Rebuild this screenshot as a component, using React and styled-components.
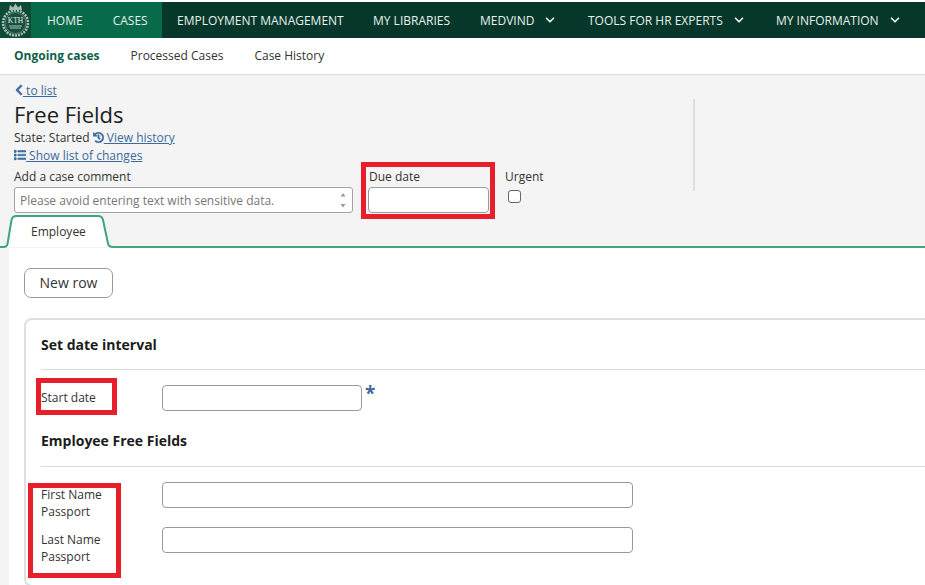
import React from "react";
import styled, { createGlobalStyle } from "styled-components";
import { FaChevronLeft, FaHistory, FaList } from "react-icons/fa";
import { FiChevronDown } from "react-icons/fi";

const GlobalStyle = createGlobalStyle`
  html, body {
    margin: 0;
    padding: 0;
    background: #fff;
    overflow: hidden;
  }
  body {
    font-family: "Open Sans", "Liberation Sans", sans-serif;
    font-size: 12px;
    color: #222;
  }
  * {
    box-sizing: border-box;
  }
`;

const Page = styled.div`
  position: relative;
  width: 925px;
  height: 585px;
  padding-top: 2px;
  overflow: hidden;
`;

const TopBar = styled.nav`
  display: flex;
  align-items: center;
  height: 36px;
  background: #06372a;
`;

const Logo = styled.div`
  width: 31px;
  height: 36px;
  flex: none;
  background: #0a4a36;
  display: flex;
  align-items: center;
  justify-content: center;
`;

const ActiveGroup = styled.div`
  display: flex;
  align-items: center;
  flex: none;
  height: 100%;
  width: 131px;
  padding-left: 16px;
  gap: 30px;
  background: #076a4b;
`;

const NavItems = styled.div`
  display: flex;
  align-items: center;
  flex: none;
  height: 100%;
  padding-left: 15px;
`;

const NavItem = styled.span`
  display: flex;
  align-items: center;
  width: ${(p) => (p.$w ? `${p.$w}px` : "auto")};
  flex: none;
  font-size: 12px;
  color: #e6f2ec;
  white-space: nowrap;

  svg {
    margin-left: 9px;
    flex: none;
  }
`;

const SubNav = styled.div`
  display: flex;
  align-items: center;
  height: 37px;
  padding: 0 0 2px 14px;
  gap: 31px;
  background: #fff;
  border-bottom: 1px solid #dcdcdc;
`;

const SubLink = styled.span`
  font-size: 12px;
  font-weight: ${(p) => (p.$active ? 700 : 400)};
  color: ${(p) => (p.$active ? "#0f6049" : "#333")};
`;

const Content = styled.div`
  background: #f4f4f4;
`;

const Header = styled.header`
  position: relative;
  height: 173px;
  padding: 7px 14px 0;
`;

const Divider = styled.div`
  position: absolute;
  left: 693px;
  top: 24px;
  width: 2px;
  height: 92px;
  background: #dedede;
`;

const BlueLink = styled.a`
  color: #3a6b9c;
  text-decoration: underline;
  font-size: 12px;
  line-height: 17px;

  svg {
    vertical-align: -1px;
    stroke: currentColor;
    stroke-width: 24px;
  }
`;

const BackIcon = styled(FaChevronLeft)`
  font-size: 12px;
  margin: 0 -2px 0 -1px;
`;

const HistoryIcon = styled(FaHistory)`
  font-size: 11px;
`;

const ListIcon = styled(FaList)`
  font-size: 12px;
`;

const Title = styled.h1`
  margin: 0;
  font-size: 22px;
  font-weight: 400;
  line-height: 30px;
  color: #1d1d1d;
`;

const InfoLine = styled.div`
  height: 18px;
  line-height: 18px;
  font-size: 12px;
  color: #333;
`;

const FieldRow = styled.div`
  display: flex;
  align-items: flex-start;
  margin-top: 3px;
`;

const Field = styled.div`
  width: ${(p) => p.$w}px;
  margin-left: ${(p) => p.$ml || 0}px;
  flex: none;
`;

const FieldLabel = styled.div`
  height: 19px;
  line-height: 18px;
  padding-left: ${(p) => p.$pl || 0}px;
  font-size: 12px;
  color: #333;
`;

const CommentBox = styled.div`
  display: flex;
  align-items: center;
  justify-content: space-between;
  height: 26px;
  padding: 0 5px;
  background: #fff;
  border: 1px solid #a3a3a3;
  border-radius: 3px;
  font-size: 12px;
  color: #777;
`;

const Spin = styled.svg`
  flex: none;
`;

const TextInput = styled.input`
  display: block;
  width: ${(p) => p.$w}px;
  height: 26px;
  background: #fff;
  border: 1px solid #9a9a9a;
  border-radius: 4px;
  padding: 0 5px;
`;

const CheckBox = styled.input.attrs({ type: "checkbox" })`
  appearance: none;
  display: block;
  width: 13px;
  height: 13px;
  margin: 3px 0 0 3px;
  background: #fff;
  border: 1px solid #666;
  border-radius: 3px;
`;

const TabRow = styled.div`
  position: absolute;
  left: 0;
  right: 0;
  bottom: 0;
  height: 33px;
`;

const Tab = styled.svg`
  position: absolute;
  left: 0;
  bottom: 0;
`;

const TabLine = styled.div`
  position: absolute;
  left: 113px;
  right: 0;
  bottom: 0;
  height: 2px;
  background: #3fa67a;
`;

const TabLabel = styled.span`
  position: absolute;
  left: 31px;
  top: 8px;
  font-size: 12px;
  color: #333;
`;

const Body = styled.main`
  height: 337px;
  margin-left: 9px;
  padding: 20px 0 0 15px;
  background: #fff;
`;

const NewRowButton = styled.button`
  display: block;
  width: 89px;
  height: 30px;
  padding: 0 0 2px;
  background: #fff;
  border: 1px solid #9a9a9a;
  border-radius: 7px;
  font-family: inherit;
  font-size: 14px;
  color: #333;
`;

const Card = styled.section`
  width: 920px;
  height: 269px;
  margin-top: 20px;
  padding: 0 0 0 15px;
  border: 2px solid #dfdfdf;
  border-radius: 8px;
`;

const SectionTitle = styled.h2`
  display: flex;
  align-items: center;
  height: ${(p) => p.$h}px;
  margin: ${(p) => p.$mt || 0}px 0 0;
  font-size: 14px;
  font-weight: 700;
  color: #1c1c1c;
  border-bottom: 1px solid #dcdcdc;
  padding-bottom: ${(p) => p.$pb || 0}px;
`;

const FormRow = styled.div`
  display: flex;
  align-items: flex-start;
  height: ${(p) => p.$h}px;
  margin-top: ${(p) => p.$mt}px;
`;

const RowLabel = styled.div`
  width: 121px;
  flex: none;
  padding-top: ${(p) => p.$pt}px;
  font-size: 12px;
  line-height: 17px;
  color: #333;
`;

const Star = styled.span`
  margin: -3px 0 0 3px;
  font-size: 19px;
  font-weight: 700;
  line-height: 22px;
  color: #3a6b9c;
`;

const RedMark = styled.div`
  position: absolute;
  left: ${(p) => p.$x}px;
  top: ${(p) => p.$y}px;
  width: ${(p) => p.$w}px;
  height: ${(p) => p.$h}px;
  border: 5px solid #e81e2b;
  pointer-events: none;
`;

const navItems = [
  { label: "EMPLOYMENT MANAGEMENT", w: 196 },
  { label: "MY LIBRARIES", w: 107 },
  { label: "MEDVIND", w: 108, menu: true },
  { label: "TOOLS FOR HR EXPERTS", w: 188, menu: true },
  { label: "MY INFORMATION", w: 149, menu: true },
];

const marks = [
  { x: 361, y: 162, w: 134, h: 57 },
  { x: 36, y: 378, w: 81, h: 37 },
  { x: 28, y: 483, w: 93, h: 95 },
];

function KthLogo() {
  return (
    <svg width="31" height="36" viewBox="0 0 31 36">
      <circle cx="15.5" cy="21" r="12.5" fill="none" stroke="#a9bdb3" strokeWidth="2.6" strokeDasharray="2 1" />
      <circle cx="15.5" cy="21" r="10.5" fill="#16503e" stroke="#8aa599" strokeWidth="0.6" />
      <path d="M9 8 L10 3 L13 5.5 L15.5 1.5 L18 5.5 L21 3 L22 8 Z" fill="#a9bdb3" />
      <text x="15.5" y="21" textAnchor="middle" fontSize="7.5" fontFamily="Liberation Serif, serif" fill="#e9f0ec">
        KTH
      </text>
      <rect x="9" y="23.5" width="13" height="1" fill="#a9bdb3" />
      <rect x="10" y="25.5" width="11" height="1" fill="#a9bdb3" />
    </svg>
  );
}

export default function App() {
  return (
    <Page>
      <GlobalStyle />
      <TopBar>
        <Logo>
          <KthLogo />
        </Logo>
        <ActiveGroup>
          <NavItem>HOME</NavItem>
          <NavItem>CASES</NavItem>
        </ActiveGroup>
        <NavItems>
          {navItems.map((item) => (
            <NavItem key={item.label} $w={item.w}>
              {item.label}
              {item.menu && <FiChevronDown size={14} strokeWidth={3} />}
            </NavItem>
          ))}
        </NavItems>
      </TopBar>

      <SubNav>
        <SubLink $active>Ongoing cases</SubLink>
        <SubLink>Processed Cases</SubLink>
        <SubLink>Case History</SubLink>
      </SubNav>

      <Content>
        <Header>
          <Divider />
          <BlueLink>
            <BackIcon />
            {" to list"}
          </BlueLink>
          <Title>Free Fields</Title>
          <InfoLine>
            State: Started{" "}
            <BlueLink>
              <HistoryIcon />
              {" View history"}
            </BlueLink>
          </InfoLine>
          <InfoLine>
            <BlueLink>
              <ListIcon />
              {" Show list of changes"}
            </BlueLink>
          </InfoLine>
          <FieldRow>
            <Field $w={339}>
              <FieldLabel>Add a case comment</FieldLabel>
              <CommentBox>
                Please avoid entering text with sensitive data.
                <Spin width="8" height="18" viewBox="0 0 8 18">
                  <path d="M1.5 5.5 L4 2 L6.5 5.5 Z" fill="#999" />
                  <path d="M1.5 13 L4 16.5 L6.5 13 Z" fill="#999" />
                </Spin>
              </CommentBox>
            </Field>
            <Field $w={121} $ml={15}>
              <FieldLabel $pl={1}>Due date</FieldLabel>
              <TextInput $w={121} />
            </Field>
            <Field $w={60} $ml={16}>
              <FieldLabel>Urgent</FieldLabel>
              <CheckBox />
            </Field>
          </FieldRow>
          <TabRow>
            <Tab width="114" height="33" viewBox="0 0 114 33">
              <path
                d="M0 32 H4 C6 32 7 31 7.5 29 L11.5 5 C12 2.5 13.5 1 16.5 1 H98 C101 1 102.5 2.5 103 5 L108 28.5 C108.5 31 110 32 113 32 H114"
                fill="#fff"
                stroke="#3fa67a"
                strokeWidth="2"
              />
            </Tab>
            <TabLine />
            <TabLabel>Employee</TabLabel>
          </TabRow>
        </Header>

        <Body>
          <NewRowButton>New row</NewRowButton>
          <Card>
            <SectionTitle $h={50} $pb={1}>Set date interval</SectionTitle>
            <FormRow $h={30} $mt={15}>
              <RowLabel $pt={4}>Start date</RowLabel>
              <TextInput $w={200} />
              <Star>*</Star>
            </FormRow>
            <SectionTitle $h={53} $mt={-1}>
              Employee Free Fields
            </SectionTitle>
            <FormRow $h={45} $mt={15}>
              <RowLabel $pt={4}>
                First Name
                <br />
                Passport
              </RowLabel>
              <TextInput $w={471} />
            </FormRow>
            <FormRow $h={45} $mt={0}>
              <RowLabel $pt={4}>
                Last Name
                <br />
                Passport
              </RowLabel>
              <TextInput $w={471} />
            </FormRow>
          </Card>
        </Body>
      </Content>

      {marks.map((m) => (
        <RedMark key={m.x} $x={m.x} $y={m.y} $w={m.w} $h={m.h} />
      ))}
    </Page>
  );
}
